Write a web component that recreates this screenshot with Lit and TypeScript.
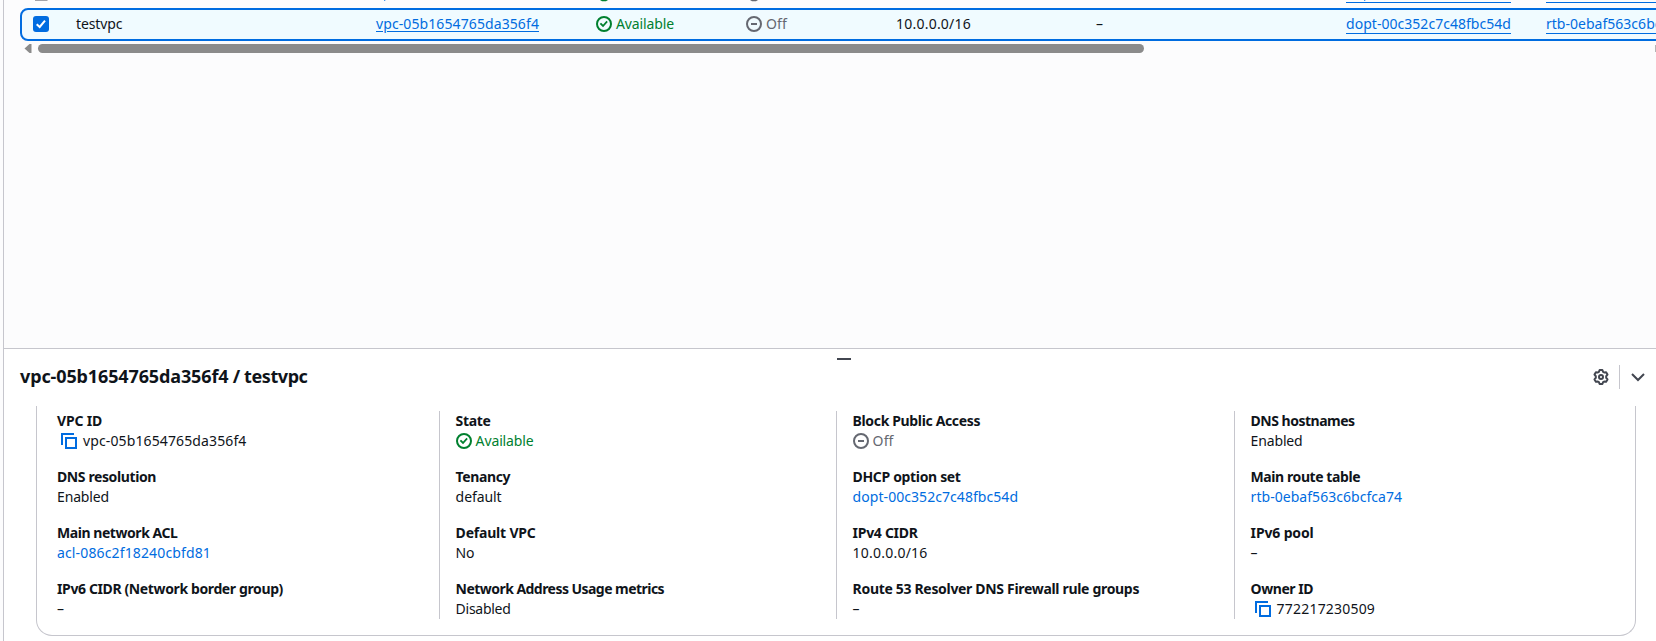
import { LitElement, html, svg, css } from "lit";
import { customElement, property } from "lit/decorators.js";

type Kind = "text" | "link" | "ok" | "off" | "copy";
interface Field { label: string; lw: number; value: string; vw: number; kind: Kind; }

const f = (label: string, lw: number, value: string, vw: number, kind: Kind = "text"): Field =>
  ({ label, lw, value, vw, kind });

const COLUMNS: Field[][] = [
  [
    f("VPC ID", 45, "vpc-05b1654765da356f4", 163.5, "copy"),
    f("DNS resolution", 99, "Enabled", 52),
    f("Main network ACL", 120.5, "acl-086c2f18240cbfd81", 154, "link"),
    f("IPv6 CIDR (Network border group)", 226, "–", 8),
  ],
  [
    f("State", 35, "Available", 58, "ok"),
    f("Tenancy", 54.5, "default", 46),
    f("Default VPC", 80, "No", 18.5),
    f("Network Address Usage metrics", 208.5, "Disabled", 55),
  ],
  [
    f("Block Public Access", 127.5, "Off", 21, "off"),
    f("DHCP option set", 108, "dopt-00c352c7c48fbc54d", 165.5, "link"),
    f("IPv4 CIDR", 65, "10.0.0.0/16", 75),
    f("Route 53 Resolver DNS Firewall rule groups", 286.5, "–", 8),
  ],
  [
    f("DNS hostnames", 104, "Enabled", 52),
    f("Main route table", 109.5, "rtb-0ebaf563c6bcfca74", 151.5, "link"),
    f("IPv6 pool", 63, "–", 8),
    f("Owner ID", 62.5, "772217230509", 98.5, "copy"),
  ],
];

/** Text whose tracking is tuned so that it fills the given width. */
@customElement("fit-text")
class FitText extends LitElement {
  @property() text = "";
  @property({ type: Number }) w = 0;
  static styles = css`
    :host { display: inline-block; white-space: pre; }
  `;
  render() { return html`<span>${this.text}</span>`; }
  updated() {
    const s = this.renderRoot.querySelector("span") as HTMLElement;
    s.style.letterSpacing = "0px";
    const d = this.w - s.getBoundingClientRect().width;
    s.style.letterSpacing = `${d / this.text.length}px`;
  }
}

const fit = (text: string, w: number) => html`<fit-text .text=${text} .w=${w}></fit-text>`;

const icon = (cls: string, body: unknown) =>
  html`<svg class="icon ${cls}" width="16" height="16" viewBox="0 0 16 16" fill="none" stroke="currentColor" stroke-width="2">${body}</svg>`;
const okIcon = () => icon("green", svg`<circle cx="8" cy="8" r="7"/><path d="m5 8 2 2 3.52-4" stroke-linecap="square" stroke-width="1.8"/>`);
const offIcon = () => icon("grey", svg`<circle cx="8" cy="8" r="7"/><path d="M5 8h6"/>`);
const copyIcon = () => icon("blue", svg`<path d="M5 5h10v10H5z"/><path d="M1 12V1h12"/>`);

@customElement("app-root")
class AppRoot extends LitElement {
  static styles = css`
    :host {
      display: block; width: 1656px; height: 641px; overflow: hidden; background: #fcfcfd;
      font: 14px/20px "Noto Sans", sans-serif; color: #0f141a;
    }
    .page { box-sizing: border-box; height: 641px; margin-left: 3px; border-left: 1px solid #c6c6cd; display: flex; flex-direction: column; }
    .prev { display: block; height: 8px; flex: none; }
    .row {
      box-sizing: border-box; height: 33px; flex: none; margin-left: 16px; width: 1700px;
      border: 2px solid #006ce0; border-radius: 8px; background: #f0fbff;
      display: grid; align-items: start; padding: 4px 0 0 11px;
      grid-template-columns: 43px 300px 220px 150px 150px 200px 250px 200px auto;
    }
    .cell { display: flex; align-items: center; height: 20px; }
    .icon { display: block; flex: none; }
    .green { color: #00802f; } .grey { color: #656871; } .blue { color: #006ce0; } .dark { color: #424650; }
    .gap { gap: 4px; }
    .check { width: 16px; height: 16px; border-radius: 3px; background: #006ce0; color: #fff; }
    .under { text-decoration: underline; text-underline-offset: 2px; text-decoration-thickness: 1px; }
    .bordered { border-bottom: 1px solid #006ce0; height: 20px; box-sizing: border-box; }
    .scroll { display: flex; align-items: center; height: 9px; flex: none; margin: 3px 0 0 20px; }
    .thumb { width: 1106px; height: 9px; border-radius: 5px; background: #8b8b8b; margin-left: 6px; }
    .end { width: 1px; height: 7px; background: #b5b5b5; margin-left: 511px; }
    .space { flex: 1; }
    .panel { height: 292px; flex: none; border-top: 1px solid #c6c6cd; background: #fff; }
    .handle { width: 14px; height: 2px; background: #424650; margin: 9px 0 0 833px; }
    .head { display: flex; align-items: center; height: 24px; margin: 5px 10px 0 16px; }
    .title { flex: 1; font-size: 18px; line-height: 22px; height: 24px; font-weight: 700; }
    .bar { width: 1px; height: 24px; background: #c6c6cd; margin: 0 10px; }
    .card {
      box-sizing: border-box; width: 1600px; height: 230px; margin: 17px 0 0 32px; padding-top: 5px;
      border: 1px solid #c6c6cd; border-top: 0; border-radius: 0 0 16px 16px;
      display: grid; grid-template-columns: 402px 397px 398px 1fr; align-items: start;
    }
    .col { display: flex; flex-direction: column; gap: 16px; height: 208px; padding-left: 15.6px; border-left: 1px solid #c6c6cd; box-sizing: border-box; }
    .col.first { border-left: 0; padding-left: 20px; }
    .label { font-weight: 700; height: 20px; }
    .value { display: flex; align-items: center; height: 20px; }
    .copy { gap: 6px; padding-left: 4px; }
  `;

  private value(x: Field) {
    const t = fit(x.value, x.vw);
    switch (x.kind) {
      case "link": return html`<div class="value blue">${t}</div>`;
      case "ok": return html`<div class="value green gap">${okIcon()}${t}</div>`;
      case "off": return html`<div class="value grey gap">${offIcon()}${t}</div>`;
      case "copy": return html`<div class="value copy">${copyIcon()}${t}</div>`;
      default: return html`<div class="value">${t}</div>`;
    }
  }

  render() {
    return html`
      <div class="page">
        <svg class="prev" width="1652" height="8" viewBox="4 0 1652 8">
          <path d="M35 0h12.500v.8h-12.500z" fill="#8c8c94"/>
          <path d="M384 0h1.300v1h-1.300zM1364 0h1.300v1h-1.300z" fill="#006ce0" opacity=".7"/>
          <path d="M600 0h8l-2 1.200h-4z" fill="#00802f"/>
          <path d="M750 0h8l-2 1.200h-4z" fill="#656871"/>
          <path d="M1346 2h165v1h-165zM1546 2h110v1h-110z" fill="#006ce0"/>
        </svg>
        <div class="row">
          <div class="cell">${icon("check", svg`<path d="M3.700 8.200 6.700 11 12 4.700"/>`)}</div>
          <div class="cell">${fit("testvpc", 46.5)}</div>
          <div class="cell blue"><fit-text class="under" .text=${"vpc-05b1654765da356f4"} .w=${163}></fit-text></div>
          <div class="cell green gap">${okIcon()}${fit("Available", 58)}</div>
          <div class="cell grey gap">${offIcon()}${fit("Off", 21)}</div>
          <div class="cell">${fit("10.0.0.0/16", 75)}</div>
          <div class="cell">${fit("–", 8)}</div>
          <div class="cell blue"><span class="bordered">${fit("dopt-00c352c7c48fbc54d", 165)}</span></div>
          <div class="cell blue"><span class="bordered">${fit("rtb-0ebaf563c6bcfca74", 151)}</span></div>
        </div>
        <div class="scroll">
          <svg class="icon" width="8" height="9" viewBox="0 0 8 9"><path d="M.5 4.500 5.500 0H7.500V9H5.500z" fill="#8b8b8b"/></svg>
          <div class="thumb"></div><div class="end"></div>
        </div>
        <div class="space"></div>
        <div class="panel">
          <div class="handle"></div>
          <div class="head">
            <div class="title">${fit("vpc-05b1654765da356f4", 208.5)}${fit(" / testvpc", 79)}</div>
            ${icon("dark", svg`<path stroke-linejoin="round" d="M5.900 2.900 6.600 1h2.800l.7 1.900 1 .6 2-.3 1.400 2.400L13.200 7.200v1.600l1.300 1.600-1.400 2.400-2-.3-1 .6L9.400 15H6.600l-.7-1.900-1-.6-2 .3-1.400-2.400 1.300-1.600V7.200L1.500 5.600 2.900 3.200l2 .3z"/><circle cx="8" cy="8" r="2"/>`)}
            <div class="bar"></div>
            ${icon("dark", svg`<path d="m2 5 6 6 6-6"/>`)}
          </div>
          <div class="card">
            ${COLUMNS.map((c, i) => html`<div class="col ${i ? "" : "first"}">
              ${c.map((x) => html`<div><div class="label">${fit(x.label, x.lw)}</div>${this.value(x)}</div>`)}
            </div>`)}
          </div>
        </div>
      </div>`;
  }
}
